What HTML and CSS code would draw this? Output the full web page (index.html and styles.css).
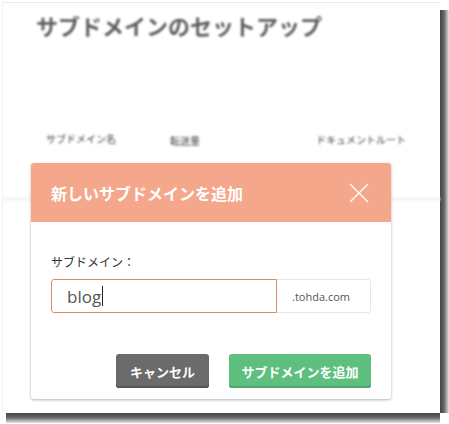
FILE: index.html
```html
<!DOCTYPE html>
<html lang="ja">
<head>
    <meta charset="UTF-8">
    <title>サブドメインのセットアップ</title>
    <link rel="stylesheet" href="styles.css">
</head>
<body>
    <div class="shot">
        <div class="frame">
            <!-- page behind the dialog -->
            <div class="page">
                <h1>サブドメインのセットアップ</h1>
                <div class="cols">
                    <span class="col-name">サブドメイン名</span>
                    <span class="col-traffic">転送量</span>
                    <span class="col-root">ドキュメントルート</span>
                </div>
                <div class="rule"></div>
            </div>

            <!-- Add subdomain dialog -->
            <div class="modal">
                <div class="modal-head">
                    <span class="modal-title">新しいサブドメインを追加</span>
                    <svg class="close" width="20" height="20" viewBox="0 0 20 20">
                        <path d="M1 1 L19 19 M19 1 L1 19" stroke="#fff" stroke-width="1.4" fill="none"/>
                    </svg>
                </div>
                <div class="modal-body">
                    <label for="sub">サブドメイン：</label>
                    <div class="input-group">
                        <div class="input">blog<span class="caret"></span></div>
                        <div class="addon">.tohda.com</div>
                    </div>
                    <div class="actions">
                        <button class="btn btn-cancel">キャンセル</button>
                        <button class="btn btn-add">サブドメインを追加</button>
                    </div>
                </div>
            </div>
        </div>
    </div>
</body>
</html>
```

FILE: styles.css
```css
body {
    margin: 0;
    background-color: #fff;
    font-family: "Noto Sans CJK JP", "Noto Sans", sans-serif;
}

/* the screenshot with its drop shadow */
.shot {
    width: 449px;
    height: 424px;
    padding: 2px 0 0 2px;
    box-sizing: border-box;
    background-color: #fff;
    background-image:
        linear-gradient(to right, #444, #666 45%, #aaa 75%, #e6e6e6),
        linear-gradient(to bottom, #444, #666 45%, #aaa 75%, #e6e6e6);
    background-size: 9px 403px, 434px 10px;
    background-position: 440px 10px, 6px 413px;
    background-repeat: no-repeat;
}

.frame {
    position: relative;
    width: 437px;
    height: 410px;
    background-color: #fff;
    border-top: 1px solid #ececec;
    border-left: 1px solid #f2f2f2;
}

.page {
    filter: blur(1.2px);
    color: #555;
}

h1 {
    margin: 0;
    padding: 7px 0 0 33px;
    font-size: 22px;
    font-weight: 700;
    line-height: 30px;
    color: #5e5e5e;
}

.cols {
    display: flex;
    margin-top: 92px;
    font-size: 10px;
    line-height: 14px;
    color: #444;
}

.col-name {
    margin-left: 43px;
}

.col-traffic {
    margin-left: 54px;
    margin-top: 2px;
}

.col-root {
    margin-left: 116px;
    margin-top: 1px;
}

.rule {
    height: 4px;
    margin-top: 49px;
    background-color: #f5f5f5;
}

.modal {
    position: absolute;
    left: 28px;
    top: 160px;
    width: 360px;
    background-color: #fff;
    border-radius: 3px;
    box-shadow: 0 1px 3px rgba(0, 0, 0, 0.3);
}

.modal-head {
    display: flex;
    align-items: center;
    justify-content: space-between;
    height: 59px;
    padding: 0 22px 0 20px;
    background-color: #f5a78c;
    border-radius: 3px 3px 0 0;
}

.modal-title {
    color: #fff;
    font-size: 16px;
    font-weight: 700;
}

.close {
    display: block;
}

.modal-body {
    padding: 32px 20px 11px;
}

label {
    display: block;
    font-size: 12px;
    line-height: 16px;
    color: #333;
    margin-bottom: 9px;
}

.input-group {
    display: flex;
    height: 34px;
}

.input {
    display: flex;
    align-items: center;
    width: 209px;
    padding-left: 15px;
    border: 1px solid #e08a6c;
    border-radius: 3px 0 0 3px;
    font-family: "Open Sans", sans-serif;
    font-size: 17px;
    color: #555;
}

.caret {
    display: inline-block;
    width: 1px;
    height: 20px;
    background-color: #222;
    margin-left: 1px;
}

.addon {
    display: flex;
    align-items: center;
    flex: 1;
    padding-left: 15px;
    border: 1px solid #e6e6e6;
    border-left: none;
    border-radius: 0 3px 3px 0;
    font-family: "Open Sans", sans-serif;
    font-size: 11px;
    color: #555;
}

.actions {
    display: flex;
    justify-content: flex-end;
    gap: 20px;
    margin-top: 41px;
}

.btn {
    height: 34px;
    border: none;
    border-radius: 3px;
    color: #fff;
    font-family: "Noto Sans CJK JP", sans-serif;
    font-size: 13px;
    font-weight: 700;
    cursor: pointer;
}

.btn-cancel {
    width: 93px;
    background-color: #6b6b6b;
    box-shadow: inset 0 -2px 0 #555;
}

.btn-add {
    width: 142px;
    background-color: #5ebf7f;
    box-shadow: inset 0 -2px 0 #4aa86a;
}
```
